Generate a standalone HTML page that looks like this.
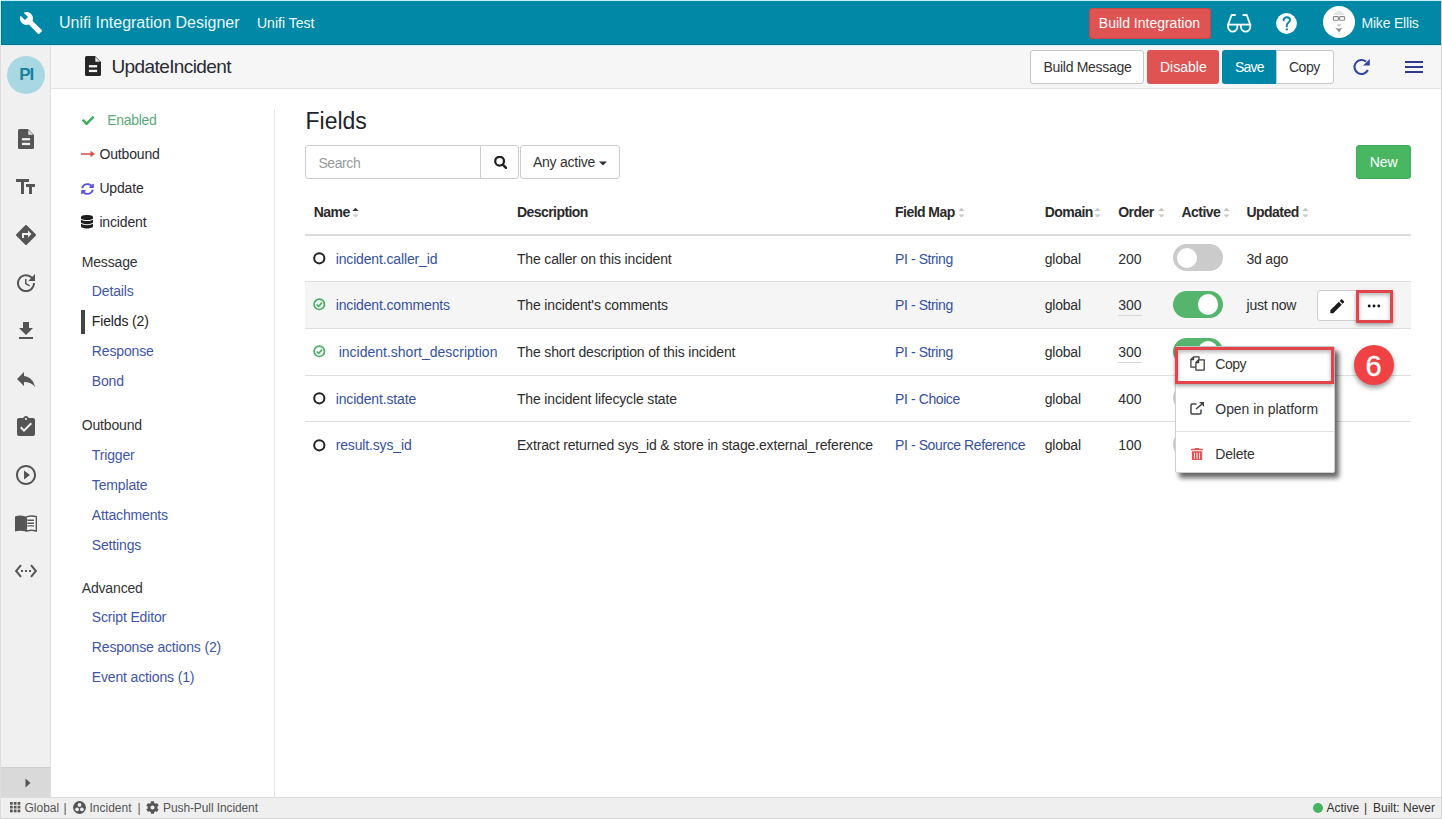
<!DOCTYPE html>
<html><head><meta charset="utf-8">
<style>
*{margin:0;padding:0;box-sizing:border-box}
html,body{width:1442px;height:819px;overflow:hidden;background:#fff}
body{position:relative;font-family:"Liberation Sans",sans-serif;font-size:14px;color:#333}
.a{position:absolute}
.t{position:absolute;line-height:1;white-space:nowrap}
svg{position:absolute;display:block}
#frame{position:absolute;left:0;top:0;width:1442px;height:819px;border:1px solid #d2d2d2;border-top-color:#c6f1fa;border-left-color:#dedede;pointer-events:none;z-index:50}
#hdr{left:1px;top:1px;width:1440px;height:44px;background:#0088a6;box-shadow:inset 1px -1px 0 #007590}
#sub{left:51px;top:45px;width:1390px;height:44px;background:#f6f6f6;border-bottom:1px solid #e3e3e3}
#side{left:1px;top:45px;width:50px;height:753px;background:#f0f0f0;border-right:1px solid #e0e0e0}
#nav{left:51px;top:89px;width:224px;height:709px;background:#fff}
#navb{left:274px;top:109px;width:1px;height:689px;background:#e6e6e6}
#status{left:1px;top:797px;width:1440px;height:21px;background:#efefef;border-top:1px solid #dcdcdc}
.btn{position:absolute;border-radius:3px;line-height:1}
.link{color:#3a53a4}
.nlink{color:#4155a8}
</style></head><body>
<div id="frame"></div>
<div class="a" style="left:0;top:0;width:1px;height:45px;background:#c6f4fc;z-index:51"></div>
<div class="a" style="left:1px;top:45px;width:1440px;height:1px;background:#d3eef4;z-index:40"></div>
<div id="hdr" class="a"></div>
<!-- header content -->
<svg style="left:19px;top:11px" width="24" height="24" viewBox="0 0 24 24"><path fill="#fff" d="M22.7 19l-9.1-9.1c.9-2.3.4-5-1.5-6.9-2-2-5-2.4-7.4-1.3L9 6 6 9 1.6 4.7C.4 7.1.9 10.1 2.9 12.1c1.9 1.9 4.6 2.4 6.9 1.5l9.1 9.1c.4.4 1 .4 1.4 0l2.3-2.3c.5-.4.5-1.1.1-1.4z"/></svg>
<div class="t" style="left:59px;top:14.5px;font-size:16px;color:#e8f8fb">Unifi Integration Designer</div>
<div class="t" style="left:257px;top:16.2px;font-size:14px;color:#f0fbfd">Unifi Test</div>
<div class="btn" style="left:1089px;top:7.5px;width:121.5px;height:31px;background:#e05353;border:1px solid #c44a4a"></div>
<div class="t" style="left:1098.8px;top:15.8px;font-size:14px;color:#fff">Build Integration</div>
<svg style="left:1225.5px;top:13.5px" width="26" height="20" viewBox="0 0 26 20"><g fill="none" stroke="#f4fdff" stroke-width="1.85" stroke-linejoin="round"><path d="M2 10.6H24.3"/><path d="M2 10.2V12.3A4.7 5.3 0 0 0 11.4 12.3V10.2"/><path d="M14.9 10.2V12.3A4.7 5.3 0 0 0 24.3 12.3V10.2"/><path d="M2.1 10.6L5.6 1.0H9.0" stroke-linecap="round"/><path d="M24.2 10.6L20.7 1.0H17.3" stroke-linecap="round"/></g></svg>
<svg style="left:1276px;top:12.5px" width="21" height="21" viewBox="0 0 21 21"><circle cx="10.5" cy="10.5" r="10.4" fill="#fff"/><path d="M7.6 7.4q0.3-3.1 3.3-3.1q3.1 0 3.1 2.8q0 1.6-1.7 2.7q-1.5 1-1.5 2.6v1" fill="none" stroke="#0088a6" stroke-width="1.9" stroke-linecap="round"/><circle cx="10.8" cy="16.4" r="1.15" fill="#0088a6"/></svg>
<svg style="left:1323px;top:6px" width="32" height="32" viewBox="0 0 32 32"><circle cx="16" cy="16" r="16" fill="#fff"/><path d="M10.2 8.9Q16 0.8 21.6 8.9Z" fill="#e4e4e4"/><rect x="10.4" y="10.6" width="5" height="3.6" rx="0.8" fill="none" stroke="#8a8a8a" stroke-width="1.1"/><rect x="16.6" y="10.6" width="5" height="3.6" rx="0.8" fill="none" stroke="#8a8a8a" stroke-width="1.1"/><path d="M13.8 18.2H18.4L16.8 20.6H15.4z" fill="#c4c4c4"/><path d="M12 21.3Q16 24.2 19.4 21.3L16.2 26.5z" fill="#8e8e8e"/><path d="M14.8 26.5H17.6L16.6 30.5H15.6z" fill="#ececec"/></svg>
<div class="t" style="left:1361.5px;top:16.2px;font-size:14px;color:#e8f9fc;letter-spacing:-0.2px">Mike Ellis</div>
<div id="side" class="a"></div>
<!-- icon sidebar -->
<div class="a" style="left:7px;top:56px;width:38px;height:38px;border-radius:50%;background:#a9d8e2"></div>
<div class="t" style="left:19.3px;top:65.8px;font-size:17px;font-weight:bold;color:#1a819e;letter-spacing:-1.2px">PI</div>
<svg style="left:18px;top:129px" width="16" height="20" viewBox="0 0 16 20"><path d="M1.6 0H10L16 6V18.4Q16 20 14.4 20H1.6Q0 20 0 18.4V1.6Q0 0 1.6 0z" fill="#555"/><path d="M10.3 0.9V5.7H15.1z" fill="#e6e6e6"/><rect x="3.9" y="9.1" width="8.2" height="2.3" fill="#efefef"/><rect x="3.9" y="13.8" width="8.2" height="2.3" fill="#efefef"/></svg>
<svg style="left:14px;top:175px;transform:scaleX(-1)" width="24" height="24" viewBox="0 0 24 24"><path fill="#555" d="M9 4v3h5v12h3V7h5V4H9zm-6 8h3v7h3v-7h3V9H3v3z"/></svg>
<svg style="left:14px;top:222.7px" width="24" height="24" viewBox="0 0 24 24"><path fill="#555" d="M21.71 11.29l-9-9c-.39-.39-1.020-.39-1.41 0l-9 9c-.39.39-.39 1.02 0 1.41l9 9c.39.39 1.02.39 1.41 0l9-9c.39-.38.39-1.01 0-1.41zM14 14.5V12h-4v3H8v-4c0-.55.45-1 1-1h5V7.5l3.5 3.5-3.5 3.5z"/></svg>
<svg style="left:14px;top:271px" width="24" height="24" viewBox="0 0 24 24"><path fill="#555" d="M21 10.12h-6.78l2.74-2.82c-2.73-2.7-7.150-2.8-9.880-.1-2.73 2.71-2.73 7.08 0 9.79s7.15 2.71 9.88 0C18.32 15.65 19 14.08 19 12.1h2c0 1.98-.88 4.55-2.64 6.29-3.51 3.48-9.21 3.48-12.72 0-3.5-3.47-3.53-9.11-.02-12.58s9.14-3.47 12.65 0L21 3v7.12zM12.5 8v4.25l3.5 2.08-.72 1.21L11 13V8h1.5z"/></svg>
<svg style="left:14px;top:319px" width="24" height="24" viewBox="0 0 24 24"><path fill="#555" d="M19 9h-4V3H9v6H5l7 7 7-7zM5 18v2h14v-2H5z"/></svg>
<svg style="left:14px;top:367px" width="24" height="24" viewBox="0 0 24 24"><path fill="#555" d="M10 9V5l-7 7 7 7v-4.1c5 0 8.5 1.6 11 5.1-1-5-4-10-11-11z"/></svg>
<svg style="left:14px;top:415px" width="24" height="24" viewBox="0 0 24 24"><path fill="#555" d="M19 3h-4.18C14.4 1.84 13.3 1 12 1c-1.3 0-2.4.84-2.82 2H5c-1.1 0-2 .9-2 2v14c0 1.1.9 2 2 2h14c1.1 0 2-.9 2-2V5c0-1.1-.9-2-2-2zm-7 0c.55 0 1 .45 1 1s-.45 1-1 1-1-.45-1-1 .45-1 1-1zm-2 14l-4-4 1.41-1.41L10 14.17l6.590-6.590L18 9l-8 8z"/></svg>
<svg style="left:14px;top:463px" width="24" height="24" viewBox="0 0 24 24"><path fill="#555" d="M10 16.5l6-4.5-6-4.5v9zM12 2C6.48 2 2 6.48 2 12s4.48 10 10 10 10-4.48 10-10S17.52 2 12 2zm0 18c-4.41 0-8-3.59-8-8s3.59-8 8-8 8 3.59 8 8-3.59 8-8 8z"/></svg>
<svg style="left:15px;top:515.3px" width="22" height="17" viewBox="0 0 22 17"><path fill="#555" d="M0 1.4Q5 -0.3 10.9 1.5V16.6Q5 14.9 0 16.6z"/><path fill="#fafafa" stroke="#555" stroke-width="1.4" d="M11.4 1.9Q16.3 0.3 21.3 1.6V16Q16.3 14.6 11.4 16.1z"/><path d="M12.4 5.3H19M12.4 8.2H19M12.4 10.9H19" stroke="#555" stroke-width="1.4"/></svg>
<svg style="left:14px;top:559px" width="24" height="24" viewBox="0 0 24 24"><path fill="#555" d="M7.77 6.76L6.23 5.48.82 12l5.41 6.52 1.54-1.28L3.42 12l4.35-5.24zM7 13h2v-2H7v2zm10-2h-2v2h2v-2zm-6 2h2v-2h-2v2zm6.77-7.52l-1.54 1.28L20.58 12l-4.35 5.24 1.54 1.28L23.18 12l-5.41-6.52z"/></svg>
<div class="a" style="left:1px;top:767px;width:49px;height:30px;background:#d9d9d9;border-top:1px solid #d0d0d0"></div>
<svg style="left:25px;top:778px" width="6" height="10" viewBox="0 0 6 10"><path fill="#555" d="M0.5 0.5L5.5 5L0.5 9.5z"/></svg>
<div id="sub" class="a"></div>
<!-- subheader content -->
<svg style="left:85px;top:56px" width="16" height="20" viewBox="0 0 16 20"><path d="M1.6 0H10L16 6V18.4Q16 20 14.4 20H1.6Q0 20 0 18.4V1.6Q0 0 1.6 0z" fill="#262626"/><path d="M10.3 0.9V5.7H15.1z" fill="#e9e9e9"/><rect x="3.9" y="9.1" width="8.2" height="2.3" fill="#f6f6f6"/><rect x="3.9" y="13.8" width="8.2" height="2.3" fill="#f6f6f6"/></svg>
<div class="t" style="left:111.5px;top:57.2px;font-size:19px;letter-spacing:-0.6px;color:#2a2a33">UpdateIncident</div>
<div class="btn" style="left:1030px;top:50px;width:114px;height:34px;background:#fff;border:1px solid #c8c8c8"></div>
<div class="t" style="left:1043.5px;top:60px;font-size:14px;color:#333;letter-spacing:-0.3px">Build Message</div>
<div class="btn" style="left:1147px;top:50px;width:72px;height:34px;background:#e05353"></div>
<div class="t" style="left:1160px;top:60px;font-size:14px;color:#fff">Disable</div>
<div class="btn" style="left:1276px;top:50px;width:58px;height:34px;background:#fff;border:1px solid #c8c8c8;border-radius:0 3px 3px 0"></div>
<div class="btn" style="left:1222px;top:50px;width:54px;height:34px;background:#0086a6;border-radius:3px 0 0 3px"></div>
<div class="t" style="left:1235px;top:60px;font-size:14px;color:#fff;letter-spacing:-0.8px">Save</div>
<div class="t" style="left:1289px;top:60px;font-size:14px;color:#333;letter-spacing:-0.5px">Copy</div>
<svg style="left:1352px;top:58px" width="19" height="18" viewBox="0 0 19 18"><path d="M15.84 11.96A7 7 0 1 1 14.0 3.64" fill="none" stroke="#3245a5" stroke-width="2.1"/><path d="M17.8 1V7.6H11.2z" fill="#3245a5"/></svg>
<div class="a" style="left:1405.2px;top:61px;width:17.8px;height:2px;background:#2d3a8f"></div>
<div class="a" style="left:1405.2px;top:66px;width:17.8px;height:2px;background:#2d3a8f"></div>
<div class="a" style="left:1405.2px;top:71px;width:17.8px;height:2px;background:#2d3a8f"></div>
<div id="nav" class="a"></div>
<div id="navb" class="a"></div>
<!-- nav panel -->
<svg style="left:81.8px;top:115.5px" width="12.2" height="9.4" viewBox="0 65 512 382" preserveAspectRatio="none"><path fill="#3fae5a" d="M173.898 439.404l-166.4-166.4c-9.997-9.997-9.997-26.206 0-36.204l36.203-36.204c9.997-9.998 26.207-9.998 36.204 0L192 312.69 432.095 72.596c9.997-9.997 26.207-9.997 36.204 0l36.203 36.204c9.997 9.997 9.997 26.206 0 36.204l-294.4 294.401c-9.998 9.997-26.207 9.997-36.204-.001z"/></svg>
<div class="t" style="left:107.3px;top:112.7px;font-size:14px;color:#5aaa7c;letter-spacing:-0.3px">Enabled</div>
<svg style="left:80.5px;top:150px" width="14" height="8" viewBox="0 0 14 8"><path d="M0 4H10.5" stroke="#d9534f" stroke-width="1.6"/><path d="M9.5 0.8L14 4L9.5 7.2z" fill="#d9534f"/></svg>
<div class="t" style="left:99.4px;top:147.35px;font-size:14px;color:#2b2b33;letter-spacing:-0.15px">Outbound</div>
<svg style="left:80.5px;top:182.5px" width="13" height="12" viewBox="0 0 512 512" preserveAspectRatio="none"><path fill="#5b54d8" d="M370.72 133.28C339.458 104.008 298.888 87.962 255.848 88c-77.458.068-144.328 53.178-162.791 126.85-1.344 5.363-6.122 9.15-11.651 9.15H24.103c-7.498 0-13.194-6.807-11.807-14.176C33.933 94.924 134.813 8 256 8c66.448 0 126.791 26.136 171.315 68.685L463.03 40.97C478.149 25.851 504 36.559 504 57.941V192c0 13.255-10.745 24-24 24H345.941c-21.382 0-32.09-25.851-16.971-40.971l41.75-41.749zM32 296h134.059c21.382 0 32.09 25.851 16.971 40.971l-41.75 41.75c31.262 29.273 71.835 45.319 114.876 45.28 77.418-.07 144.315-53.144 162.787-126.849 1.344-5.363 6.122-9.15 11.651-9.15h57.304c7.498 0 13.194 6.807 11.807 14.176C478.067 417.076 377.187 504 256 504c-66.448 0-126.791-26.136-171.315-68.685L48.97 471.03C33.851 486.149 8 475.441 8 454.059V320c0-13.255 10.745-24 24-24z"/></svg>
<div class="t" style="left:99.4px;top:181.15px;font-size:14px;color:#2b2b33;letter-spacing:-0.15px">Update</div>
<svg style="left:81px;top:215.3px" width="12" height="13.5" viewBox="0 0 448 512" preserveAspectRatio="none"><path fill="#1e1e1e" d="M448 73.143v45.714C448 159.143 347.667 192 224 192S0 159.143 0 118.857V73.143C0 32.857 100.333 0 224 0s224 32.857 224 73.143zM448 176v102.857C448 319.143 347.667 352 224 352S0 319.143 0 278.857V176c48.125 33.143 136.208 48.572 224 48.572S399.874 209.143 448 176zm0 160v102.857C448 479.143 347.667 512 224 512S0 479.143 0 438.857V336c48.125 33.143 136.208 48.572 224 48.572S399.874 369.143 448 336z"/></svg>
<div class="t" style="left:99.4px;top:215.35px;font-size:14px;color:#2b2b33;letter-spacing:-0.15px">incident</div>
<div class="t" style="left:81.7px;top:255.45px;font-size:14px;color:#333;letter-spacing:-0.15px">Message</div>
<div class="t" style="left:91.8px;top:284.25px;font-size:14px;color:#4155a8;letter-spacing:-0.15px">Details</div>
<div class="a" style="left:81px;top:309.7px;width:4px;height:24px;background:#444"></div>
<div class="t" style="left:91.8px;top:314.15px;font-size:14px;color:#222;letter-spacing:-0.15px">Fields (2)</div>
<div class="t" style="left:91.8px;top:344.05px;font-size:14px;color:#4155a8;letter-spacing:-0.15px">Response</div>
<div class="t" style="left:91.8px;top:374.05px;font-size:14px;color:#4155a8;letter-spacing:-0.15px">Bond</div>
<div class="t" style="left:81.7px;top:418.35px;font-size:14px;color:#333;letter-spacing:-0.15px">Outbound</div>
<div class="t" style="left:91.8px;top:447.75px;font-size:14px;color:#4155a8;letter-spacing:-0.15px">Trigger</div>
<div class="t" style="left:91.8px;top:477.75px;font-size:14px;color:#4155a8;letter-spacing:-0.15px">Template</div>
<div class="t" style="left:91.8px;top:507.75px;font-size:14px;color:#4155a8;letter-spacing:-0.15px">Attachments</div>
<div class="t" style="left:91.8px;top:537.75px;font-size:14px;color:#4155a8;letter-spacing:-0.15px">Settings</div>
<div class="t" style="left:81.7px;top:580.75px;font-size:14px;color:#333;letter-spacing:-0.15px">Advanced</div>
<div class="t" style="left:91.8px;top:609.85px;font-size:14px;color:#4155a8;letter-spacing:-0.15px">Script Editor</div>
<div class="t" style="left:91.8px;top:639.85px;font-size:14px;color:#4155a8;letter-spacing:-0.15px">Response actions (2)</div>
<div class="t" style="left:91.8px;top:669.85px;font-size:14px;color:#4155a8;letter-spacing:-0.15px">Event actions (1)</div>
<!-- MAIN START -->
<div class="t" style="left:305.5px;top:110.33px;font-size:23px;color:#1f2328;">Fields</div>
<div class="a" style="left:305px;top:145px;width:176px;height:34px;border:1px solid #cdcdcd;border-radius:3px 0 0 3px;background:#fff"></div>
<div class="a" style="left:480px;top:145px;width:39px;height:34px;border:1px solid #cdcdcd;border-radius:0 3px 3px 0;background:#fff"></div>
<div class="t" style="left:318.4px;top:155.75px;font-size:14px;color:#999;letter-spacing:-0.4px">Search</div>
<svg style="left:493.5px;top:156.3px" width="13" height="13" viewBox="0 0 13 13"><circle cx="5.6" cy="5.2" r="4.4" fill="none" stroke="#222" stroke-width="2.3"/><path d="M8.8 8.6L12 11.9" stroke="#222" stroke-width="2.5" stroke-linecap="round"/></svg>
<div class="a" style="left:519.5px;top:145px;width:100.5px;height:34px;border:1px solid #cdcdcd;border-radius:3px;background:#fff"></div>
<div class="t" style="left:533px;top:154.85px;font-size:14px;color:#333;letter-spacing:-0.25px">Any active</div>
<svg style="left:599px;top:160.5px" width="8" height="5" viewBox="0 0 8 5"><path d="M0 0.5H8L4 4.5z" fill="#333"/></svg>
<div class="a" style="left:1356px;top:145px;width:55px;height:34px;border-radius:3px;background:#49b762;border:1px solid #43a95a"></div>
<div class="t" style="left:1369.7px;top:155.45px;font-size:14px;color:#fff;">New</div>
<div class="t" style="left:313.7px;top:205.45px;font-size:14px;color:#2a2a2a;font-weight:bold;letter-spacing:-0.55px">Name</div>
<svg style="left:352.3px;top:206.5px" width="7" height="11" viewBox="0 0 7 11"><path d="M0.4 3.9L3.5 0.7L6.6 3.9z" fill="#333"/><path d="M0.4 7.6L3.5 10.6L6.6 7.6z" fill="#c8c8c8"/></svg>
<div class="t" style="left:516.9px;top:205.45px;font-size:14px;color:#2a2a2a;font-weight:bold;letter-spacing:-0.55px">Description</div>
<div class="t" style="left:895.1px;top:205.45px;font-size:14px;color:#2a2a2a;font-weight:bold;letter-spacing:-0.55px">Field Map</div>
<svg style="left:957.7px;top:206.5px" width="7" height="11" viewBox="0 0 7 11"><path d="M0.4 3.9L3.5 0.7L6.6 3.9z" fill="#c4c4c4"/><path d="M0.4 7.6L3.5 10.6L6.6 7.6z" fill="#c8c8c8"/></svg>
<div class="t" style="left:1044.7px;top:205.45px;font-size:14px;color:#2a2a2a;font-weight:bold;letter-spacing:-0.55px">Domain</div>
<svg style="left:1094px;top:206.5px" width="7" height="11" viewBox="0 0 7 11"><path d="M0.4 3.9L3.5 0.7L6.6 3.9z" fill="#c4c4c4"/><path d="M0.4 7.6L3.5 10.6L6.6 7.6z" fill="#c8c8c8"/></svg>
<div class="t" style="left:1118.2px;top:205.45px;font-size:14px;color:#2a2a2a;font-weight:bold;letter-spacing:-0.55px">Order</div>
<svg style="left:1158px;top:206.5px" width="7" height="11" viewBox="0 0 7 11"><path d="M0.4 3.9L3.5 0.7L6.6 3.9z" fill="#c4c4c4"/><path d="M0.4 7.6L3.5 10.6L6.6 7.6z" fill="#c8c8c8"/></svg>
<div class="t" style="left:1181.5px;top:205.45px;font-size:14px;color:#2a2a2a;font-weight:bold;letter-spacing:-0.55px">Active</div>
<svg style="left:1223px;top:206.5px" width="7" height="11" viewBox="0 0 7 11"><path d="M0.4 3.9L3.5 0.7L6.6 3.9z" fill="#c4c4c4"/><path d="M0.4 7.6L3.5 10.6L6.6 7.6z" fill="#c8c8c8"/></svg>
<div class="t" style="left:1246.5px;top:205.45px;font-size:14px;color:#2a2a2a;font-weight:bold;letter-spacing:-0.55px">Updated</div>
<svg style="left:1302px;top:206.5px" width="7" height="11" viewBox="0 0 7 11"><path d="M0.4 3.9L3.5 0.7L6.6 3.9z" fill="#c4c4c4"/><path d="M0.4 7.6L3.5 10.6L6.6 7.6z" fill="#c8c8c8"/></svg>
<div class="a" style="left:305px;top:234px;width:1106px;height:2px;background:#dcdcdc"></div>
<div class="a" style="left:305px;top:236px;width:1106px;height:45px;background:#fff"></div>
<div class="a" style="left:305px;top:281px;width:1106px;height:1px;background:#dedede"></div>
<svg style="left:313px;top:252.3px" width="13" height="13" viewBox="0 0 13 13"><circle cx="6.3" cy="6.3" r="5.1" fill="none" stroke="#222" stroke-width="2"/></svg>
<div class="t" style="left:335.7px;top:251.85px;font-size:14px;color:#35519e;letter-spacing:-0.15px">incident.caller_id</div>
<div class="t" style="left:516.9px;top:251.85px;font-size:14px;color:#2d2d2d;letter-spacing:-0.15px">The caller on this incident</div>
<div class="t" style="left:895px;top:251.85px;font-size:14px;color:#35519e;letter-spacing:-0.4px">PI - String</div>
<div class="t" style="left:1044.7px;top:251.85px;font-size:14px;color:#2d2d2d;letter-spacing:-0.2px">global</div>
<div class="t" style="left:1118.3px;top:251.85px;font-size:14px;color:#2d2d2d;letter-spacing:-0.1px">200</div>
<div class="a" style="left:1173px;top:244.2px;width:50px;height:27px;border-radius:14px;background:#cbcbcb"></div>
<div class="a" style="left:1176.8px;top:247.5px;width:20.5px;height:20.5px;border-radius:50%;background:#fff"></div>
<div class="t" style="left:1246.5px;top:251.85px;font-size:14px;color:#2d2d2d;letter-spacing:-0.2px">3d ago</div>
<div class="a" style="left:305px;top:282px;width:1106px;height:46px;background:#f5f5f5"></div>
<div class="a" style="left:305px;top:328px;width:1106px;height:1px;background:#dedede"></div>
<svg style="left:313px;top:298.4px" width="13" height="13" viewBox="0 0 13 13"><circle cx="6.3" cy="6.3" r="5.2" fill="none" stroke="#4aae62" stroke-width="1.7"/><path d="M3.6 6.5L5.6 8.4L9.1 4.7" fill="none" stroke="#4aae62" stroke-width="1.7"/></svg>
<div class="t" style="left:335.7px;top:298.35px;font-size:14px;color:#35519e;letter-spacing:-0.15px">incident.comments</div>
<div class="t" style="left:516.9px;top:298.35px;font-size:14px;color:#2d2d2d;letter-spacing:-0.15px">The incident's comments</div>
<div class="t" style="left:895px;top:298.35px;font-size:14px;color:#35519e;letter-spacing:-0.4px">PI - String</div>
<div class="t" style="left:1044.7px;top:298.35px;font-size:14px;color:#2d2d2d;letter-spacing:-0.2px">global</div>
<div class="t" style="left:1118.3px;top:298.35px;font-size:14px;color:#2d2d2d;letter-spacing:-0.1px">300</div>
<div class="a" style="left:1118px;top:314.8px;width:24px;height:1px;background:#d6d6d6"></div>
<div class="a" style="left:1173px;top:290.7px;width:50px;height:27px;border-radius:14px;background:#55b56c"></div>
<div class="a" style="left:1197.9px;top:294.0px;width:20.5px;height:20.5px;border-radius:50%;background:#fff"></div>
<div class="t" style="left:1246.5px;top:298.35px;font-size:14px;color:#2d2d2d;letter-spacing:-0.2px">just now</div>
<div class="a" style="left:305px;top:329px;width:1106px;height:46px;background:#fff"></div>
<div class="a" style="left:305px;top:375px;width:1106px;height:1px;background:#dedede"></div>
<svg style="left:313px;top:345.4px" width="13" height="13" viewBox="0 0 13 13"><circle cx="6.3" cy="6.3" r="5.2" fill="none" stroke="#4aae62" stroke-width="1.7"/><path d="M3.6 6.5L5.6 8.4L9.1 4.7" fill="none" stroke="#4aae62" stroke-width="1.7"/></svg>
<div class="t" style="left:338.7px;top:345.35px;font-size:14px;color:#35519e;letter-spacing:0px">incident.short_description</div>
<div class="t" style="left:516.9px;top:345.35px;font-size:14px;color:#2d2d2d;letter-spacing:-0.15px">The short description of this incident</div>
<div class="t" style="left:895px;top:345.35px;font-size:14px;color:#35519e;letter-spacing:-0.4px">PI - String</div>
<div class="t" style="left:1044.7px;top:345.35px;font-size:14px;color:#2d2d2d;letter-spacing:-0.2px">global</div>
<div class="t" style="left:1118.3px;top:345.35px;font-size:14px;color:#2d2d2d;letter-spacing:-0.1px">300</div>
<div class="a" style="left:1118px;top:361.8px;width:24px;height:1px;background:#d6d6d6"></div>
<div class="a" style="left:1173px;top:337.7px;width:50px;height:27px;border-radius:14px;background:#55b56c"></div>
<div class="a" style="left:1197.9px;top:341.0px;width:20.5px;height:20.5px;border-radius:50%;background:#fff"></div>
<div class="a" style="left:305px;top:376px;width:1106px;height:45px;background:#fff"></div>
<div class="a" style="left:305px;top:421px;width:1106px;height:1px;background:#dedede"></div>
<svg style="left:313px;top:392.3px" width="13" height="13" viewBox="0 0 13 13"><circle cx="6.3" cy="6.3" r="5.1" fill="none" stroke="#222" stroke-width="2"/></svg>
<div class="t" style="left:335.7px;top:391.85px;font-size:14px;color:#35519e;letter-spacing:-0.15px">incident.state</div>
<div class="t" style="left:516.9px;top:391.85px;font-size:14px;color:#2d2d2d;letter-spacing:-0.15px">The incident lifecycle state</div>
<div class="t" style="left:895px;top:391.85px;font-size:14px;color:#35519e;letter-spacing:-0.4px">PI - Choice</div>
<div class="t" style="left:1044.7px;top:391.85px;font-size:14px;color:#2d2d2d;letter-spacing:-0.2px">global</div>
<div class="t" style="left:1118.3px;top:391.85px;font-size:14px;color:#2d2d2d;letter-spacing:-0.1px">400</div>
<div class="a" style="left:1173px;top:384.2px;width:50px;height:27px;border-radius:14px;background:#cbcbcb"></div>
<div class="a" style="left:1176.8px;top:387.5px;width:20.5px;height:20.5px;border-radius:50%;background:#fff"></div>
<div class="a" style="left:305px;top:422px;width:1106px;height:46px;background:#fff"></div>
<svg style="left:313px;top:438.8px" width="13" height="13" viewBox="0 0 13 13"><circle cx="6.3" cy="6.3" r="5.1" fill="none" stroke="#222" stroke-width="2"/></svg>
<div class="t" style="left:335.7px;top:438.35px;font-size:14px;color:#35519e;letter-spacing:-0.15px">result.sys_id</div>
<div class="t" style="left:516.9px;top:438.35px;font-size:14px;color:#2d2d2d;letter-spacing:-0.15px">Extract returned sys_id &amp; store in stage.external_reference</div>
<div class="t" style="left:895px;top:438.35px;font-size:14px;color:#35519e;letter-spacing:-0.4px">PI - Source Reference</div>
<div class="t" style="left:1044.7px;top:438.35px;font-size:14px;color:#2d2d2d;letter-spacing:-0.2px">global</div>
<div class="t" style="left:1118.3px;top:438.35px;font-size:14px;color:#2d2d2d;letter-spacing:-0.1px">100</div>
<div class="a" style="left:1173px;top:430.7px;width:50px;height:27px;border-radius:14px;background:#cbcbcb"></div>
<div class="a" style="left:1176.8px;top:434.0px;width:20.5px;height:20.5px;border-radius:50%;background:#fff"></div>
<div class="a" style="left:1317px;top:290px;width:76px;height:31px;border:1px solid #cfcfcf;border-radius:3px;background:#fff"></div>
<svg style="left:1327.8px;top:296.5px" width="18.5" height="18.5" viewBox="0 0 24 24"><path fill="#1c1c1c" d="M3 17.25V21h3.75L17.81 9.94l-3.75-3.75L3 17.25zM20.71 7.04c.39-.39.39-1.02 0-1.41l-2.34-2.34c-.39-.39-1.02-.39-1.41 0l-1.83 1.83 3.75 3.75 1.83-1.83z"/></svg>
<div class="a" style="left:1356px;top:290px;width:37px;height:33px;border:3px solid #e3434b;box-shadow:0 2px 4px rgba(0,0,0,.35), inset 0 2px 4px rgba(0,0,0,.3)"></div>
<svg style="left:1366px;top:303px" width="16" height="6" viewBox="0 0 16 6"><circle cx="3.2" cy="3" r="1.45" fill="#151515"/><circle cx="8" cy="3" r="1.45" fill="#151515"/><circle cx="12.8" cy="3" r="1.45" fill="#151515"/></svg>
<div class="a" style="left:1175px;top:346px;width:160px;height:127px;background:#fff;border:1px solid #cfcfcf;border-radius:2px;box-shadow:4px 5px 5px rgba(0,0,0,.6)"></div>
<div class="a" style="left:1175px;top:347px;width:159px;height:37px;border:3px solid #e3434b;box-shadow:0 2px 4px rgba(0,0,0,.35), inset 0 2px 4px rgba(0,0,0,.3)"></div>
<svg style="left:1189.5px;top:356.3px" width="15" height="15" viewBox="0 0 15 15"><g fill="none" stroke="#3a3a3a" stroke-width="1.25" stroke-linejoin="round"><path d="M5.8 11H0.9V3.5L3.5 0.9H9V3.8"/><path d="M3.5 0.9V3.5H0.9"/><path d="M5.9 6.5L8.6 3.8H14.2V14.1H5.9Z" fill="#fff"/><path d="M8.6 3.8V6.5H5.9"/></g></svg>
<div class="t" style="left:1215.3px;top:357.05px;font-size:14px;color:#333;letter-spacing:-0.5px">Copy</div>
<svg style="left:1189.5px;top:401.5px" width="15" height="13" viewBox="0 0 15 13"><g fill="none" stroke="#444" stroke-width="1.5"><path d="M6.5 2H2.2Q1 2 1 3.2V10.8Q1 12 2.2 12H9.8Q11 12 11 10.8V7.5"/><path d="M6 7L13.5 0.8"/></g><path d="M9.2 0H14V4.8z" fill="#444"/></svg>
<div class="t" style="left:1215.3px;top:402.25px;font-size:14px;color:#333;letter-spacing:-0.05px">Open in platform</div>
<div class="a" style="left:1176px;top:430.5px;width:158px;height:1px;background:#e2e2e2"></div>
<svg style="left:1190.5px;top:447.8px" width="12" height="12.5" viewBox="0 0 448 512" preserveAspectRatio="none"><path fill="#e05555" d="M32 464a48 48 0 0 0 48 48h288a48 48 0 0 0 48-48V128H32zm272-256a16 16 0 0 1 32 0v224a16 16 0 0 1-32 0zm-96 0a16 16 0 0 1 32 0v224a16 16 0 0 1-32 0zm-96 0a16 16 0 0 1 32 0v224a16 16 0 0 1-32 0zM432 32H312l-9.4-18.7A24 24 0 0 0 281.1 0H166.8a23.72 23.72 0 0 0-21.4 13.3L136 32H16A16 16 0 0 0 0 48v32a16 16 0 0 0 16 16h416a16 16 0 0 0 16-16V48a16 16 0 0 0-16-16z"/></svg>
<div class="t" style="left:1215.3px;top:446.85px;font-size:14px;color:#333;letter-spacing:-0.2px">Delete</div>
<div class="a" style="left:1354px;top:345px;width:40px;height:40px;border-radius:50%;background:#f04245;box-shadow:0 3px 5px rgba(0,0,0,.4)"></div>
<div class="t" style="left:1365.6px;top:351.75px;font-size:29px;color:#fff;-webkit-text-stroke:0.35px #fff">6</div>
<!-- MAIN END -->
<div id="status" class="a"></div>
<!-- status -->
<svg style="left:9.5px;top:802.3px" width="11" height="11" viewBox="0 0 11 11"><g fill="#555"><rect x="0" y="0" width="2.7" height="2.7"/><rect x="3.8" y="0" width="2.7" height="2.7"/><rect x="7.6" y="0" width="2.7" height="2.7"/><rect x="0" y="3.8" width="2.7" height="2.7"/><rect x="3.8" y="3.8" width="2.7" height="2.7"/><rect x="7.6" y="3.8" width="2.7" height="2.7"/><rect x="0" y="7.6" width="2.7" height="2.7"/><rect x="3.8" y="7.6" width="2.7" height="2.7"/><rect x="7.6" y="7.6" width="2.7" height="2.7"/></g></svg>
<div class="t" style="left:24.5px;top:802.04px;font-size:12px;color:#555;">Global</div>
<div class="t" style="left:63.5px;top:802.04px;font-size:12px;color:#555;">|</div>
<svg style="left:73px;top:801px" width="13" height="13" viewBox="0 0 13 13"><circle cx="6.5" cy="6.5" r="6.4" fill="#555"/><circle cx="6.5" cy="3.9" r="1.9" fill="#efefef"/><circle cx="4.1" cy="8.3" r="1.9" fill="#efefef"/><circle cx="8.9" cy="8.3" r="1.9" fill="#efefef"/></svg>
<div class="t" style="left:89.5px;top:802.04px;font-size:12px;color:#555;">Incident</div>
<div class="t" style="left:137.5px;top:802.04px;font-size:12px;color:#555;">|</div>
<svg style="left:146px;top:801px" width="13" height="13" viewBox="0 0 512 512"><path fill="#555" d="M487.4 315.7l-42.6-24.6c4.3-23.2 4.3-47 0-70.2l42.6-24.6c4.9-2.8 7.1-8.6 5.5-14-11.1-35.6-30-67.8-54.7-94.6-3.8-4.1-10-5.1-14.8-2.3L380.8 110c-17.9-15.4-38.5-27.3-60.8-35.1V25.8c0-5.6-3.9-10.5-9.4-11.7-36.7-8.2-74.3-7.8-109.2 0-5.5 1.2-9.4 6.1-9.4 11.7V75c-22.2 7.9-42.8 19.8-60.8 35.1L88.7 85.5c-4.9-2.8-11-1.9-14.8 2.3-24.7 26.7-43.6 58.9-54.7 94.6-1.7 5.4.6 11.2 5.5 14L67.3 221c-4.3 23.2-4.3 47 0 70.2l-42.6 24.6c-4.9 2.8-7.1 8.6-5.5 14 11.1 35.6 30 67.8 54.7 94.6 3.8 4.1 10 5.1 14.8 2.3l42.6-24.6c17.9 15.4 38.5 27.3 60.8 35.1v49.2c0 5.6 3.9 10.5 9.4 11.7 36.7 8.2 74.3 7.8 109.2 0 5.5-1.2 9.4-6.1 9.4-11.7v-49.2c22.2-7.9 42.8-19.8 60.8-35.1l42.6 24.6c4.9 2.8 11 1.9 14.8-2.3 24.7-26.7 43.6-58.9 54.7-94.6 1.5-5.5-.7-11.3-5.6-14.1zM256 336c-44.1 0-80-35.9-80-80s35.9-80 80-80 80 35.9 80 80-35.9 80-80 80z"/></svg>
<div class="t" style="left:163px;top:802.04px;font-size:12px;color:#555;letter-spacing:-0.1px">Push-Pull Incident</div>
<div class="a" style="left:1313.3px;top:802.8px;width:10.2px;height:10.2px;border-radius:50%;background:#45b35f"></div>
<div class="t" style="left:1326.4px;top:802.04px;font-size:12px;color:#333;">Active</div>
<div class="t" style="left:1364px;top:802.04px;font-size:12px;color:#333;">|</div>
<div class="t" style="left:1373px;top:802.04px;font-size:12px;color:#333;">Built: Never</div>
</body></html>
